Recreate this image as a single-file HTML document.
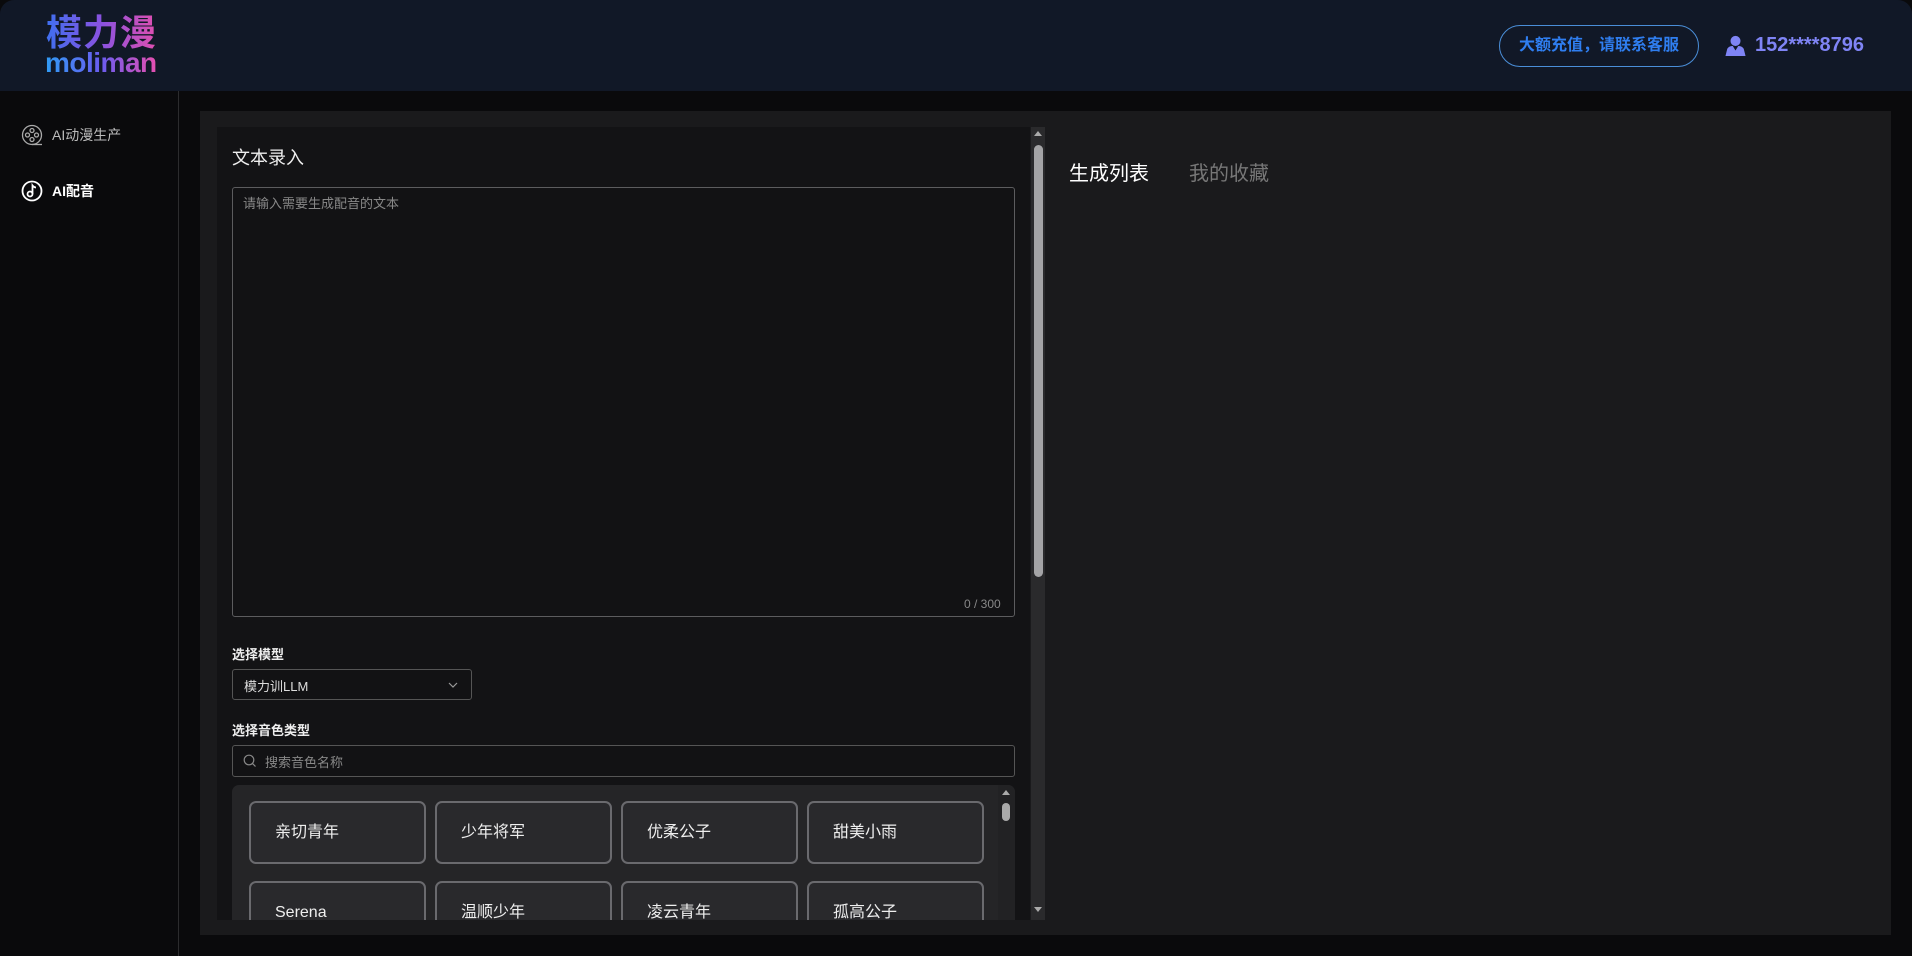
<!DOCTYPE html>
<html><head><meta charset="utf-8"><style>
*{margin:0;padding:0;box-sizing:border-box}
body{width:1912px;height:956px;background:#0a0a0c;font-family:"Liberation Sans","Noto Sans CJK SC",sans-serif;position:relative;overflow:hidden;color:#fff}
.a{position:absolute}
.hdr{left:0;top:0;width:1912px;height:91px;background:#111827;border-radius:14px 14px 0 0}
.side{left:0;top:91px;width:179px;height:865px;border-right:1px solid #2c2c2e;background:#0a0a0c}
.main{left:200px;top:111px;width:1691px;height:824px;background:#1a1a1c}
.card{left:217px;top:127px;width:813px;height:793px;background:#131315}
.ta{left:232px;top:187px;width:783px;height:430px;border:1px solid #5c5c5e;border-radius:3px;background:#121214}
.lbl{font-size:13px;font-weight:bold;color:#eee}
.vc{width:177px;height:63px;border:2px solid #6a6a6e;border-radius:7px;background:#29292c;font-size:16px;padding-left:24px;color:#eee;display:flex;align-items:center;line-height:20px}
</style></head><body>
<div class="a hdr"></div>
<div class="a" style="left:46px;top:12px;font-size:36px;font-weight:bold;line-height:42px;letter-spacing:1px;background:linear-gradient(90deg,#3f6ff0,#8a52e0,#e04fb0);-webkit-background-clip:text;color:transparent">模力漫</div>
<div class="a" style="left:45px;top:48px;font-size:28px;font-weight:bold;line-height:30px;letter-spacing:-0.5px;background:linear-gradient(90deg,#2f9cf5,#6a5cf0,#e84fb0);-webkit-background-clip:text;color:transparent">moliman</div>
<div class="a" style="left:1499px;top:25px;width:200px;height:42px;border:1px solid #4a8ed8;border-radius:21px;color:#2f7ef0;font-size:16px;font-weight:bold;text-align:center;line-height:40px">大额充值，请联系客服</div>
<svg class="a" style="left:1725px;top:35px" width="21" height="21" viewBox="0 0 22 23"><circle cx="11" cy="6.5" r="5.5" fill="#7f84f5"/><path d="M0 23 L2 15 Q4 12 8 12 L11 17 L14 12 Q18 12 20 15 L22 23Z" fill="#7f84f5"/></svg>
<div class="a" style="left:1755px;top:33px;font-size:20px;line-height:24px;font-weight:bold;color:#7f84f5">152****8796</div>
<div class="a side"></div>
<svg class="a" style="left:21px;top:124px" width="22" height="22" viewBox="0 0 22 22" fill="none" stroke="#aaa" stroke-width="1.3"><circle cx="11" cy="11" r="9.5"/><circle cx="11" cy="6.5" r="2"/><circle cx="6.5" cy="11" r="2"/><circle cx="15.5" cy="11" r="2"/><circle cx="11" cy="15.5" r="2"/><path d="M11 20.5H21"/></svg>
<div class="a" style="left:52px;top:125px;font-size:14px;color:#bbb">AI动漫生产</div>
<svg class="a" style="left:21px;top:180px" width="22" height="22" viewBox="0 0 22 22" fill="none" stroke="#fff" stroke-width="1.8"><circle cx="11" cy="11" r="9.5"/><circle cx="9" cy="14" r="2.5"/><path d="M11.5 14V5.5Q13 7.5 15 7.5"/></svg>
<div class="a" style="left:52px;top:181px;font-size:14px;font-weight:bold;color:#fff">AI配音</div>
<div class="a main"></div>
<div class="a card"></div>
<div class="a" style="left:1031px;top:127px;width:14px;height:793px;background:#2a2a2c"></div>
<div class="a" style="left:1034px;top:145px;width:9px;height:432px;border-radius:5px;background:#a4a4a6"></div>
<div class="a" style="left:1034px;top:131px;width:0;height:0;border:4px solid transparent;border-bottom:5px solid #aaa;border-top:0"></div>
<div class="a" style="left:1034px;top:907px;width:0;height:0;border:4px solid transparent;border-top:5px solid #aaa;border-bottom:0"></div>
<div class="a" style="left:232px;top:144px;font-size:18px;color:#eee">文本录入</div>
<div class="a ta"></div>
<div class="a" style="left:243px;top:193px;font-size:13px;color:#888">请输入需要生成配音的文本</div>
<div class="a" style="left:964px;top:597px;font-size:12px;color:#888">0 / 300</div>
<div class="a lbl" style="left:232px;top:644px">选择模型</div>
<div class="a" style="left:232px;top:669px;width:240px;height:31px;border:1px solid #555;border-radius:3px;background:#121214;font-size:13px;color:#ddd;padding:6px 0 0 11px">模力训LLM</div>
<svg class="a" style="left:448px;top:682px" width="10" height="7" viewBox="0 0 10 7"><path d="M1 1L5 5L9 1" stroke="#999" fill="none" stroke-width="1.2"/></svg>
<div class="a lbl" style="left:232px;top:720px">选择音色类型</div>
<div class="a" style="left:232px;top:745px;width:783px;height:32px;border:1px solid #555;border-radius:3px;background:#121214"></div>
<svg class="a" style="left:243px;top:754px" width="14" height="14" viewBox="0 0 14 14" fill="none" stroke="#888" stroke-width="1.2"><circle cx="6" cy="6" r="4.8"/><path d="M9.5 9.5L12.5 12.5"/></svg>
<div class="a" style="left:265px;top:752px;font-size:13px;color:#888">搜索音色名称</div>
<div class="a" style="left:232px;top:785px;width:783px;height:135px;background:#252527;border-radius:7px 7px 0 0;overflow:hidden">
<div class="a" style="left:766px;top:0;width:17px;height:135px;background:#222224"></div>
<div class="a" style="left:770px;top:18px;width:8px;height:18px;border-radius:4px;background:#aaa"></div>
<div class="a" style="left:770px;top:5px;border:4px solid transparent;border-bottom:5px solid #aaa;border-top:0"></div>
<div class="a vc" style="left:17px;top:16px">亲切青年</div>
<div class="a vc" style="left:203px;top:16px">少年将军</div>
<div class="a vc" style="left:389px;top:16px">优柔公子</div>
<div class="a vc" style="left:575px;top:16px">甜美小雨</div>
<div class="a vc" style="left:17px;top:96px">Serena</div>
<div class="a vc" style="left:203px;top:96px">温顺少年</div>
<div class="a vc" style="left:389px;top:96px">凌云青年</div>
<div class="a vc" style="left:575px;top:96px">孤高公子</div>
</div>
<div class="a" style="left:1069px;top:157px;font-size:20px;color:#fff">生成列表</div>
<div class="a" style="left:1189px;top:157px;font-size:20px;color:#777">我的收藏</div>
</body></html>
